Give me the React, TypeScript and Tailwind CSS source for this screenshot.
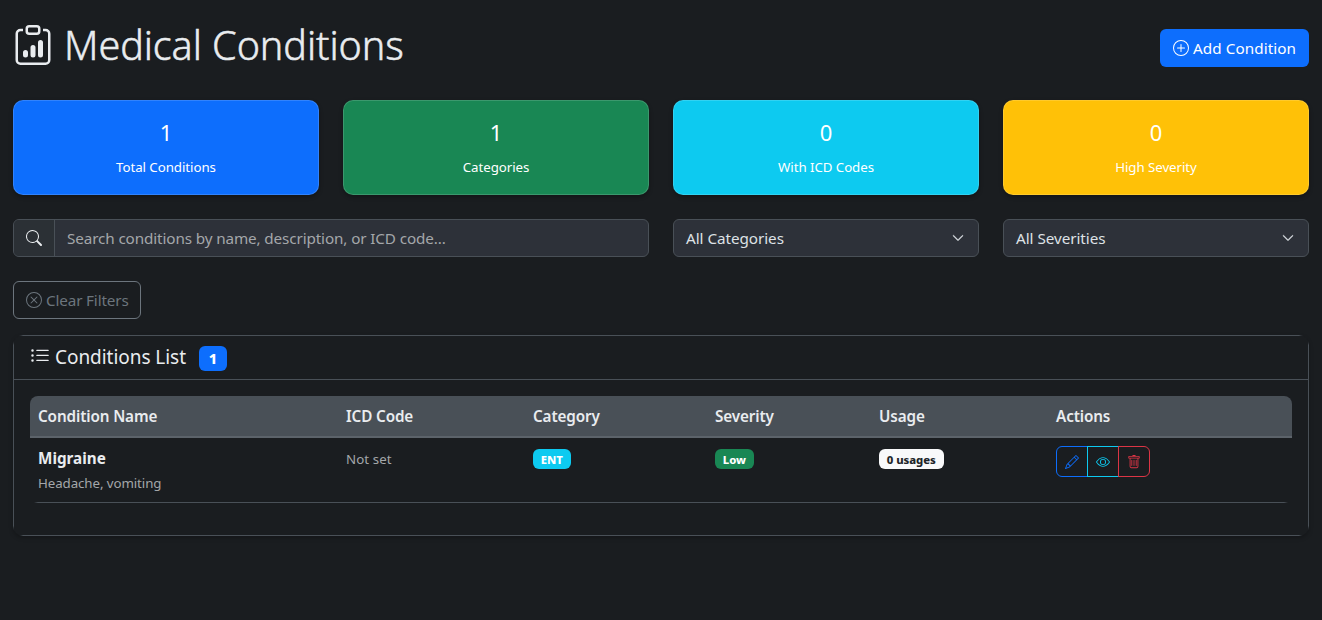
import type { ReactNode } from "react";
import { BsClipboardData, BsPlusCircle, BsSearch, BsXCircle, BsListUl, BsPencil, BsEye, BsTrash, BsChevronDown } from "react-icons/bs";

function Stat({ value, label, tone }: { value: string; label: string; tone: string }) {
  return (
    <div className={`flex h-[95px] flex-col items-center rounded-[10px] border border-white/15 pt-[17px] text-white shadow-[0_2px_4px_rgba(0,0,0,0.3)] ${tone}`}>
      <div className="text-[22px] leading-[29px]">{value}</div>
      <div className="mt-[10px] text-[13.3px] leading-[21px] tracking-[-0.06px]">{label}</div>
    </div>
  );
}

function Select({ label }: { label: string }) {
  return (
    <div className="flex h-[38px] items-center justify-between rounded-md border border-[#495057] bg-[#2d3139] pr-[14px] pl-3 text-[#dee2e6]">
      <span className="tracking-[-0.05px]">{label}</span>
      <BsChevronDown className="size-3 stroke-[0.8]" />
    </div>
  );
}

function Badge({ children, tone }: { children: ReactNode; tone: string }) {
  return <span className={`inline-flex h-5 items-center rounded-[6px] px-[7.8px] pt-px text-[11.3px] font-extrabold tracking-[-0.05px] ${tone}`}>{children}</span>;
}

export default function App() {
  return (
    <div className="min-h-[620px] bg-[#1a1d20] px-[13px] pt-[15px] font-['Noto_Sans',sans-serif] text-[15.25px] leading-6 tracking-[-0.12px] text-[#e9ecef]">
      <header className="flex h-[60px] items-start justify-between">
        <h1 className="flex h-[60px] items-center text-[39.5px] leading-[48px] font-light">
          <BsClipboardData className="mr-[11px] size-10" />
          <span className="tracking-[-0.06px] [-webkit-text-stroke:0.5px]">Medical Conditions</span>
        </h1>
        <button className="mt-[14px] flex h-[38px] w-[149px] items-center justify-center gap-1 rounded-md bg-[#0d6efd] text-white">
          <BsPlusCircle className="size-4" />
          <span className="tracking-[0.08px]">Add Condition</span>
        </button>
      </header>

      <section className="mt-[25px] grid grid-cols-4 gap-6">
        <Stat value="1" label="Total Conditions" tone="bg-[#0d6efd]" />
        <Stat value="1" label="Categories" tone="bg-[#198754]" />
        <Stat value="0" label="With ICD Codes" tone="bg-[#0dcaf0]" />
        <Stat value="0" label="High Severity" tone="bg-[#ffc107]" />
      </section>

      <section className="mt-6 grid grid-cols-4 gap-6">
        <div className="col-span-2 flex h-[38px] overflow-hidden rounded-md border border-[#495057] bg-[#2d3139]">
          <div className="flex w-[41px] items-center justify-center border-r border-[#495057] bg-[#2b3035]">
            <BsSearch className="size-4" />
          </div>
          <div className="flex items-center pl-3 text-[#a4a7aa]">Search conditions by name, description, or ICD code...</div>
        </div>
        <Select label="All Categories" />
        <Select label="All Severities" />
      </section>

      <button className="mt-6 flex h-[38px] w-[128px] items-center gap-1 rounded-md border border-[#6c757d] pl-3 text-[#6c757d]">
        <BsXCircle className="size-4" />
        <span className="tracking-[-0.15px]">Clear Filters</span>
      </button>

      <section className="mt-4 h-[201px] rounded-[10px] bg-[image:linear-gradient(90deg,transparent_5px,#495057_10px,#495057_calc(100%-10px),transparent_calc(100%-5px)),linear-gradient(90deg,transparent_5px,#495057_10px,#495057_calc(100%-10px),transparent_calc(100%-5px)),linear-gradient(180deg,transparent_5px,#495057_10px,#495057_calc(100%-10px),transparent_calc(100%-5px)),linear-gradient(180deg,transparent_5px,#495057_10px,#495057_calc(100%-10px),transparent_calc(100%-5px))] bg-[size:100%_1px,100%_1px,1px_100%,1px_100%] bg-[position:top,bottom,left,right] bg-no-repeat shadow-[0_2px_4px_rgba(0,0,0,0.25)]">
        <div className="flex h-[45px] items-center border-b border-[#495057] pl-[17px]">
          <BsListUl className="mb-[3px] size-5" />
          <h5 className="ml-[5px] w-[131px] text-[19px] tracking-[-0.05px] whitespace-nowrap">Conditions List</h5>
          <span className="mt-[2px] ml-[13px] flex h-[25px] w-7 items-center justify-center rounded-md bg-[#0d6efd] text-[14.5px] font-extrabold text-white">1</span>
        </div>
        <div className="px-[17px] pt-4">
          <table className="w-full table-fixed border-separate border-spacing-0 text-left">
            <colgroup>
              <col className="w-[308px]" />
              <col className="w-[187px]" />
              <col className="w-[182px]" />
              <col className="w-[164px]" />
              <col className="w-[177px]" />
              <col />
            </colgroup>
            <thead>
              <tr className="h-[42px] [&>th]:border-b-2 [&>th]:border-[#5c636a] [&>th]:bg-[#495057] [&>th]:px-2 [&>th]:font-semibold">
                <th className="rounded-tl-lg">Condition Name</th>
                <th>ICD Code</th>
                <th>Category</th>
                <th>Severity</th>
                <th>Usage</th>
                <th className="rounded-tr-lg">Actions</th>
              </tr>
            </thead>
            <tbody>
              <tr className="h-[65px] bg-[image:linear-gradient(90deg,transparent_4px,#495057_8px,#495057_calc(100%-8px),transparent_calc(100%-4px))] bg-[size:100%_1px] bg-bottom bg-no-repeat align-top [&>td]:px-2 [&>td]:pt-2">
                <td>
                  <div className="font-bold tracking-[0px]">Migraine</div>
                  <div className="mt-[3px] text-[13.3px] leading-[21px] tracking-[-0.08px] text-[#a4a7aa]">Headache, vomiting</div>
                </td>
                <td><div className="pt-px text-[13.3px] tracking-[0.08px] text-[#a4a7aa]">Not set</div></td>
                <td><div className="flex pt-[3px]"><Badge tone="bg-[#0dcaf0] text-white">ENT</Badge></div></td>
                <td><div className="flex pt-[3px]"><Badge tone="bg-[#198754] text-white">Low</Badge></div></td>
                <td><div className="flex pt-[3px]"><Badge tone="bg-[#f8f9fa] text-[#212529]">0 usages</Badge></div></td>
                <td>
                  <div className="flex">
                    <button className="flex h-[31px] w-8 items-center justify-center rounded-l-md border border-[#0d6efd] text-[#0d6efd]"><BsPencil className="size-[14px]" /></button>
                    <button className="-ml-px flex h-[31px] w-8 items-center justify-center border border-[#0dcaf0] text-[#0dcaf0]"><BsEye className="size-[14px]" /></button>
                    <button className="-ml-px flex h-[31px] w-8 items-center justify-center rounded-r-md border border-[#dc3545] text-[#dc3545]"><BsTrash className="size-[14px]" /></button>
                  </div>
                </td>
              </tr>
            </tbody>
          </table>
        </div>
      </section>
    </div>
  );
}
